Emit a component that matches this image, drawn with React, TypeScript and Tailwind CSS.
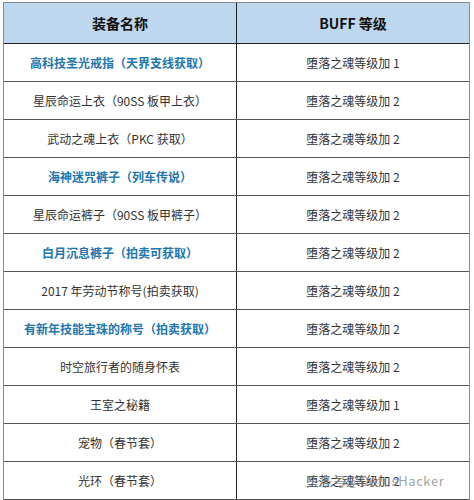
const rows: { name: string; buff: string; hot?: boolean }[] = [
  { name: '高科技圣光戒指（天界支线获取）', buff: '堕落之魂等级加 1', hot: true },
  { name: '星辰命运上衣（90SS 板甲上衣）', buff: '堕落之魂等级加 2' },
  { name: '武动之魂上衣（PKC 获取）', buff: '堕落之魂等级加 2' },
  { name: '海神迷咒裤子（列车传说）', buff: '堕落之魂等级加 2', hot: true },
  { name: '星辰命运裤子（90SS 板甲裤子）', buff: '堕落之魂等级加 2' },
  { name: '白月沉息裤子（拍卖可获取）', buff: '堕落之魂等级加 2', hot: true },
  { name: '2017 年劳动节称号(拍卖获取)', buff: '堕落之魂等级加 2' },
  { name: '有新年技能宝珠的称号（拍卖获取）', buff: '堕落之魂等级加 2', hot: true },
  { name: '时空旅行者的随身怀表', buff: '堕落之魂等级加 2' },
  { name: '王室之秘籍', buff: '堕落之魂等级加 1' },
  { name: '宠物（春节套）', buff: '堕落之魂等级加 2' },
  { name: '光环（春节套）', buff: '堕落之魂等级加 2' }
]

export default function App(): React.JSX.Element {
  return (
    <div
      className="w-[474px] h-[500px] bg-white pl-[3px] pt-[2px] overflow-hidden"
      style={{ fontFamily: '"Noto Sans CJK SC", "Noto Sans", sans-serif' }}
    >
      <div className="w-[467px] border-l border-r border-t border-[#8a8a8a]">
        <div className="flex h-[41px] bg-[#bdd7ee] border-b border-[#222]">
          <div className="w-[233px] flex items-center justify-center text-[14px] font-bold text-[#111] border-r border-[#222]">
            装备名称
          </div>
          <div className="flex-1 flex items-center justify-center text-[14px] font-bold text-[#111]">
            BUFF 等级
          </div>
        </div>
        {rows.map((r, i) => (
          <div key={i} className="relative flex h-[38px] border-b border-[#555]">
            <div
              className={
                r.hot
                  ? 'w-[233px] flex items-center justify-center text-[12px] font-bold text-[#2176ae] border-r border-[#222]'
                  : 'w-[233px] flex items-center justify-center text-[12px] text-[#333] border-r border-[#222]'
              }
            >
              {r.name}
            </div>
            <div className="flex-1 flex items-center justify-center text-[12px] text-[#333]">
              {r.buff}
            </div>
            {i === rows.length - 1 && (
              <span className="absolute left-[302px] top-[9px] text-[13px] text-[#8a8a8a]/80 tracking-[0.6px]">
                头条号@DotusHacker
              </span>
            )}
          </div>
        ))}
      </div>
    </div>
  )
}
